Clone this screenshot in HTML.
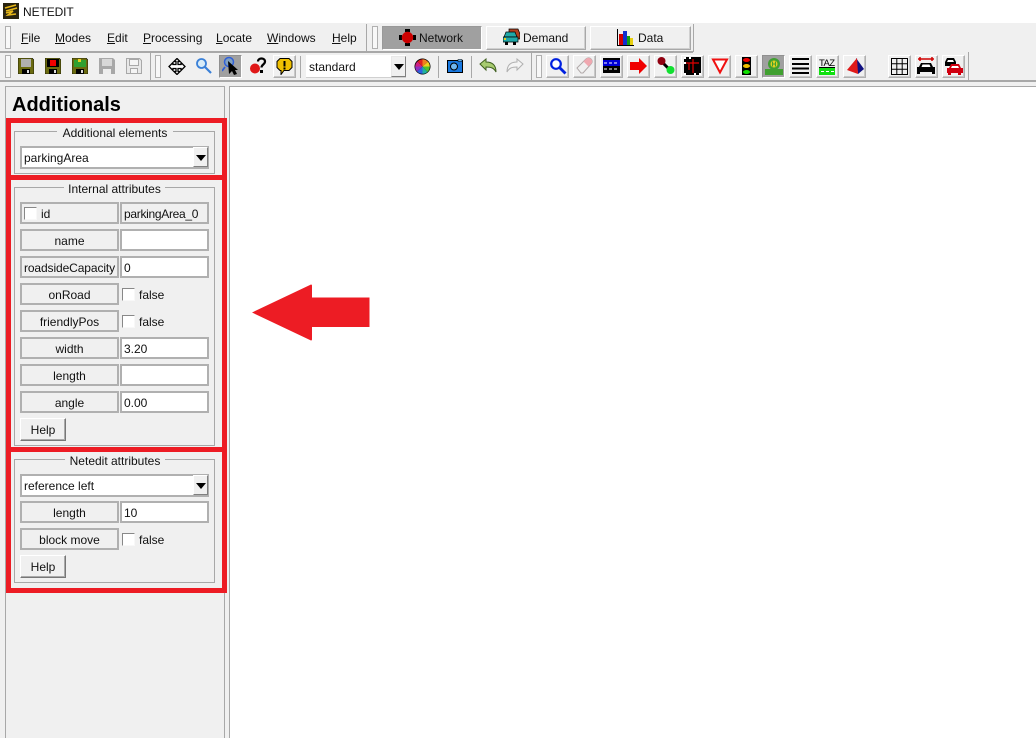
<!DOCTYPE html>
<html><head><meta charset="utf-8"><style>
html,body{margin:0;padding:0;background:#fff}
#r{position:relative;width:1036px;height:738px;overflow:hidden;background:#f0f0f0;font:12px/14px "Liberation Sans",sans-serif;color:#111}
#r div,#r svg,#r span{position:absolute;box-sizing:border-box}
.t{white-space:nowrap}
.l{background:#a8a8a8}
.g{width:6px;border:1px solid #b0b0b0;background:#f8f8f8}
.b{width:23px;height:23px;background:#f0f0f0;border:1px solid;border-color:#fff #b0b0b0 #b0b0b0 #fff;top:55px;box-shadow:inset -1px -1px 0 #c8c8c8}
.s{background:#a0a0a0;border-color:#909090 #fff #fff #909090;box-shadow:none}
.lb{left:20px;width:99px;height:22px;border:2px solid #b0b0b0;background:#f0f0f0;text-align:center;line-height:21px}
.tx{left:120px;width:89px;height:22px;border:2px solid #b0b0b0;background:#fff;padding-left:2px;line-height:21px}
.ck{width:13px;height:13px;background:#fff;border:1px solid;border-color:#888 #f8f8f8 #f8f8f8 #888}
.gb{left:14px;width:201px;border:1px solid #a8a8a8}
.cap{background:#f0f0f0;text-align:center;height:14px;line-height:14px}
.cb{left:20px;width:189px;height:23px;border:2px solid #b0b0b0;background:#fff;padding-left:2px;line-height:20px}
.ab{width:15px;height:20px;background:#f0f0f0;border:1px solid;border-color:#fff #808080 #808080 #fff}
.ab:after{content:"";position:absolute;left:2px;top:7px;border:5px solid transparent;border-top:6px solid #000;border-bottom:0}
.hp{left:20px;width:46px;height:23px;background:#f0f0f0;border:1px solid;border-color:#fff #777 #777 #fff;box-shadow:inset -1px -1px 0 #aaa;text-align:center;line-height:22px}
.m{top:31px;text-decoration:none}
.m u{text-decoration:underline}
.rd{background:#ed1c24}
.top{height:24px;border:1px solid;border-color:#fff #a8a8a8 #a8a8a8 #fff;top:26px;background:#f0f0f0;box-shadow:inset -1px -1px 0 #d0d0d0}
</style></head><body><div id="r">
<div style="left:0;top:0;width:1036px;height:23px;background:#fff"></div>
<svg style="left:3px;top:3px" width="16" height="16" viewBox="0 0 16 16"><rect width="16" height="16" fill="#2a2410"/><path d="M2 5L13 2M3 8L14 5M3 10L10 8L5 12L13 11" stroke="#e8b818" stroke-width="1.6" fill="none"/></svg>
<div class="t" style="left:23px;top:5px;letter-spacing:-.1px">NETEDIT</div>

<div class="l" style="left:0;top:51px;height:2px;width:693px"></div>
<div class="g" style="left:5px;top:26px;height:23px;width:6px"></div>
<div class="t m" style="left:21px"><u>F</u>ile</div>
<div class="t m" style="left:55px"><u>M</u>odes</div>
<div class="t m" style="left:107px"><u>E</u>dit</div>
<div class="t m" style="left:143px"><u>P</u>rocessing</div>
<div class="t m" style="left:216px"><u>L</u>ocate</div>
<div class="t m" style="left:267px"><u>W</u>indows</div>
<div class="t m" style="left:332px"><u>H</u>elp</div>
<div class="l" style="left:366px;top:24px;width:1px;height:28px"></div>
<div class="g" style="left:372px;top:26px;height:23px"></div>
<div class="l" style="left:693px;top:24px;width:1px;height:28px"></div>

<div class="top" style="left:382px;width:100px;background:#a0a0a0;border-color:#999 #fff #fff #999;box-shadow:none"></div>
<svg style="left:399px;top:29px" width="17" height="17" viewBox="0 0 17 17"><path d="M6 0h5v3h-5zM6 14h5v3h-5zM0 6h3v5h-3zM14 6h3v5h-3z" fill="#000"/><circle cx="8.5" cy="8.5" r="5.7" fill="#cc0000"/></svg>
<div class="t" style="left:419px;top:31px">Network</div>
<div class="top" style="left:486px;width:100px"></div>
<svg style="left:503px;top:28px" width="17" height="18" viewBox="0 0 17 18"><path d="M6 1h9l2 5v5H6z" fill="#b04020" stroke="#000" stroke-width=".7"/><path d="M3 4h9l2 5H1z" fill="#20a8a8" stroke="#000" stroke-width=".7"/><path d="M0 9h15v5H0z" fill="#20a8a8" stroke="#000" stroke-width=".7"/><path d="M2 14h3v3H2zM10 14h3v3h-3z" fill="#000"/><rect x="1" y="10" width="2" height="2" fill="#e8d020"/></svg>
<div class="t" style="left:523px;top:31px">Demand</div>
<div class="top" style="left:590px;width:101px"></div>
<svg style="left:617px;top:29px" width="17" height="17" viewBox="0 0 17 17"><path d="M.5 0v16.5H17" stroke="#000" fill="none"/><rect x="2" y="5" width="4" height="11" fill="#d00000"/><rect x="6" y="2" width="4" height="14" fill="#1030d0"/><rect x="10" y="7" width="3" height="9" fill="#10a010"/><rect x="13" y="9" width="3" height="7" fill="#e8d010"/></svg>
<div class="t" style="left:638px;top:31px">Data</div>

<!-- row 2 -->
<div class="l" style="left:0;top:80px;width:1036px;height:2px"></div>
<div class="g" style="left:5px;top:55px;height:23px"></div>
<svg style="left:18px;top:58px" width="16" height="16" viewBox="0 0 16 16"><path d="M0 0h14l2 2v14H0z" fill="#6b6b10" stroke="#000" stroke-width=".6"/><rect x="3" y="1" width="10" height="8" fill="#b0b0b0"/><rect x="4" y="11" width="8" height="5" fill="#000"/><rect x="9" y="12" width="2" height="3" fill="#ddd"/></svg>
<svg style="left:45px;top:58px" width="16" height="16" viewBox="0 0 16 16"><path d="M0 0h14l2 2v14H0z" fill="#6b6b10" stroke="#000" stroke-width=".6"/><rect x="2" y="1" width="12" height="8" fill="#000"/><rect x="5" y="2" width="6" height="6" fill="#f00000"/><rect x="4" y="11" width="8" height="5" fill="#000"/><rect x="9" y="12" width="2" height="3" fill="#ddd"/></svg>
<svg style="left:72px;top:58px" width="16" height="16" viewBox="0 0 16 16"><path d="M0 0h14l2 2v14H0z" fill="#6b6b10" stroke="#000" stroke-width=".6"/><rect x="2" y="2" width="12" height="7" fill="#30a030"/><rect x="6" y="1" width="3" height="3" fill="#e8d020"/><rect x="4" y="11" width="8" height="5" fill="#000"/><rect x="9" y="12" width="2" height="3" fill="#ddd"/></svg>
<svg style="left:99px;top:58px" width="16" height="16" viewBox="0 0 16 16"><path d="M0 0h14l2 2v14H0z" fill="#a8a8a8"/><rect x="3" y="1" width="10" height="7" fill="#d8d8d8"/><rect x="4" y="11" width="8" height="5" fill="#eee"/></svg>
<svg style="left:126px;top:58px" width="16" height="16" viewBox="0 0 16 16"><path d="M.5.5h13l2 2v13H.5z" fill="#e8e8e8" stroke="#a8a8a8"/><rect x="3.5" y="1.5" width="9" height="6" fill="#f4f4f4" stroke="#a8a8a8"/><rect x="4.5" y="10.5" width="7" height="5" fill="#f4f4f4" stroke="#a8a8a8"/></svg>
<div class="l" style="left:150px;top:52px;width:1px;height:29px"></div>
<div class="g" style="left:155px;top:55px;height:23px"></div>
<svg style="left:168px;top:58px" width="18" height="17" viewBox="0 0 18 17"><path d="M9 .5l3 3h-2v3h3v-2l4 4-4 4v-2h-3v3h2l-3 3-3-3h2v-3H5v2L1 8.500l4-4v2h3v-3H6z" fill="#fff" stroke="#000" stroke-width="1.300"/></svg>
<svg style="left:195px;top:57px" width="17" height="17" viewBox="0 0 17 17"><circle cx="6.500" cy="6.500" r="4.500" fill="#d8ecf8" stroke="#3a80d8" stroke-width="1.800"/><path d="M10 10l6 6" stroke="#3a80d8" stroke-width="2.200"/></svg>
<div class="b s" style="left:219px"></div>
<svg style="left:222px;top:56px" width="17" height="20" viewBox="0 0 17 20"><circle cx="7" cy="6" r="4.500" fill="#80a0c0" stroke="#3060d8" stroke-width="1.500"/><path d="M3 11L0 15" stroke="#3060d8" stroke-width="1.800"/><path d="M6 5l10 9h-3l2 4-3 1-2-4-3 3z" fill="#000"/></svg>
<svg style="left:249px;top:57px" width="18" height="18" viewBox="0 0 18 18"><circle cx="6" cy="11.500" r="5" fill="#e01818"/><path d="M9 4.500c0-4 7-4 7 0 0 3-3.500 3-3.500 6" stroke="#000" stroke-width="2.200" fill="none"/><rect x="11" y="13" width="3" height="3" fill="#000"/></svg>
<div class="b" style="left:273px"></div>
<svg style="left:276px;top:58px" width="17" height="17" viewBox="0 0 17 17"><path d="M4 .5h9l3 3v6l-3 3H8l-3 4v-4H4l-3-3v-6z" fill="#f0c000" stroke="#000"/><path d="M7.500 3h2v5.500h-2zM7.500 9.500h2v2h-2z" fill="#000"/></svg>
<div class="l" style="left:300px;top:56px;width:1px;height:22px"></div>
<div style="left:306px;top:55px;width:100px;height:23px;background:#fff;border:1px solid #d0d0d0;border-width:0 0 1px 0;padding-left:3px;line-height:24px">standard</div>
<div class="ab" style="left:391px;top:56px;width:15px;height:21px;border-color:#e8e8e8 #808080 #808080 #e8e8e8"></div>
<svg style="left:414px;top:58px" width="17" height="17" viewBox="0 0 17 17"><circle cx="8.500" cy="8.500" r="8" fill="#000"/><path d="M8.500 8.500V1.200A7.300 7.300 0 0 1 14 3.800z" fill="#f08020"/><path d="M8.500 8.500L14 3.800A7.300 7.300 0 0 1 15.800 8.500z" fill="#f0d020"/><path d="M8.500 8.500H15.800A7.300 7.300 0 0 1 13.500 14z" fill="#50c030"/><path d="M8.500 8.500L13.500 14A7.300 7.300 0 0 1 8.500 15.800z" fill="#20b0a0"/><path d="M8.500 8.500V15.800A7.300 7.300 0 0 1 3 13.500z" fill="#3060e0"/><path d="M8.500 8.500L3 13.500A7.300 7.300 0 0 1 1.200 8.500z" fill="#9030c0"/><path d="M8.500 8.500H1.200A7.300 7.300 0 0 1 3.500 3.500z" fill="#d02080"/><path d="M8.500 8.500L3.500 3.500A7.300 7.300 0 0 1 8.500 1.200z" fill="#e02020"/></svg>
<div class="l" style="left:438px;top:56px;width:1px;height:22px"></div>
<svg style="left:447px;top:59px" width="16" height="14" viewBox="0 0 16 14"><rect x=".5" y="1.500" width="15" height="12" fill="#1878e0" stroke="#000"/><rect x="11" y=".5" width="4" height="2" fill="#60b0f0" stroke="#000" stroke-width=".5"/><circle cx="7" cy="7.500" r="3.500" fill="#70b8f0" stroke="#000"/></svg>
<div class="l" style="left:471px;top:56px;width:1px;height:22px"></div>
<svg style="left:479px;top:58px" width="18" height="16" viewBox="0 0 18 16"><path d="M1 6l6-5v3c6 0 10 3 10 10-2-4-5-5-10-5v3z" fill="#a8cc70" stroke="#406020"/></svg>
<svg style="left:506px;top:58px" width="18" height="16" viewBox="0 0 18 16"><path d="M17 6l-6-5v3C5 4 1 7 1 14c2-4 5-5 10-5v3z" fill="#f4f4f4" stroke="#b0b0b0"/></svg>
<div class="l" style="left:531px;top:52px;width:1px;height:29px"></div>
<div class="g" style="left:536px;top:55px;height:23px"></div>

<div class="b" style="left:546px"></div>
<svg style="left:549px;top:57px" width="18" height="18" viewBox="0 0 18 18"><circle cx="7" cy="7" r="4.800" fill="#fff" stroke="#0020e0" stroke-width="2.200"/><path d="M10.500 10.500l6 6" stroke="#0020e0" stroke-width="2.800"/></svg>
<div class="b" style="left:573px"></div>
<svg style="left:576px;top:57px" width="18" height="18" viewBox="0 0 18 18"><path d="M1 11L10 2c2-2 4-1 5 0s2 3 0 5l-8 9H5z" fill="#f0f0f0" stroke="#b0a8a8"/><path d="M7.500 4.500L10 2c2-2 4-1 5 0s2 3 0 5l-2.500 2.500z" fill="#f0a8b0"/></svg>
<div class="b" style="left:600px"></div>
<svg style="left:603px;top:58px" width="17" height="16" viewBox="0 0 17 16"><rect width="17" height="15" fill="#000"/><rect y="2" width="17" height="6" fill="#0000d8"/><path d="M1 5h3M6 5h3M11 5h3M1 11h3M6 11h3M11 11h3" stroke="#fff"/></svg>
<div class="b" style="left:627px"></div>
<svg style="left:630px;top:58px" width="17" height="16" viewBox="0 0 17 16"><path d="M0 4h9V0l8 8-8 8v-4H0z" fill="#f00000"/></svg>
<div class="b" style="left:654px"></div>
<svg style="left:656px;top:56px" width="20" height="20" viewBox="0 0 20 20"><path d="M6 6l9 9" stroke="#000" stroke-width="3"/><circle cx="5.500" cy="5" r="4" fill="#900010"/><circle cx="14.500" cy="14" r="4" fill="#10e030"/></svg>
<div class="b" style="left:681px"></div>
<svg style="left:684px;top:57px" width="17" height="18" viewBox="0 0 17 18"><rect width="17" height="18" fill="#000"/><path d="M2 6h13M9 6v-4M9 6v10M5 6v7" stroke="#e00000" stroke-width="1.200"/><path d="M0 0h2v2H0zM5 0h2v2H5zM0 5h2v2H0zM15 16h2v2h-2zM0 16h2v2H0zM10 16h2v2h-2z" fill="#fff"/></svg>
<div class="b" style="left:708px"></div>
<svg style="left:711px;top:57px" width="18" height="18" viewBox="0 0 18 18"><path d="M2 2.500h14L9 15.500z" fill="#fff" stroke="#f01010" stroke-width="2"/></svg>
<div class="b" style="left:735px"></div>
<svg style="left:741px;top:57px" width="11" height="18" viewBox="0 0 11 18"><rect x="1" width="9" height="18" fill="#000"/><ellipse cx="5.500" cy="3" rx="3.500" ry="2" fill="#f00000"/><ellipse cx="5.500" cy="9" rx="3.500" ry="2" fill="#f0c000"/><ellipse cx="5.500" cy="15" rx="3.500" ry="2" fill="#10e000"/></svg>
<div class="b s" style="left:762px"></div>
<svg style="left:765px;top:57px" width="18" height="18" viewBox="0 0 18 18"><rect x="0" y="12" width="18" height="6" fill="#40a030"/><circle cx="9" cy="7" r="6" fill="#40a030"/><circle cx="9" cy="7" r="4" fill="#e0d020" stroke="#40a030"/><path d="M7.500 4.500v5M10.500 4.500v5M7.500 7h3" stroke="#40a030"/></svg>
<div class="b" style="left:789px"></div>
<svg style="left:792px;top:58px" width="17" height="16" viewBox="0 0 17 16"><path d="M0 1h17M0 6h17M0 10.500h17M0 15h17" stroke="#000" stroke-width="2"/></svg>
<div class="b" style="left:816px"></div>
<svg style="left:819px;top:58px" width="18" height="17" viewBox="0 0 18 17"><rect y="10" width="16" height="7" fill="#10e010"/><path d="M2 13.500h3M7 13.500h3M12 13.500h3" stroke="#fff"/><rect y="9" width="16" height="1" fill="#000"/><text x="0" y="8" font-family="Liberation Sans" font-size="9.500" fill="#000" textLength="16">TAZ</text></svg>
<div class="b" style="left:843px"></div>
<svg style="left:846px;top:57px" width="19" height="18" viewBox="0 0 19 18"><path d="M10 1L18 12L12 17z" fill="#101080"/><path d="M11 1L1 13l11 4z" fill="#e01818"/></svg>
<div class="b" style="left:888px"></div>
<svg style="left:891px;top:58px" width="17" height="17" viewBox="0 0 17 17"><path d="M.5.5h16v16H.5zM5.800.5v16M11.200.5v16M.5 5.800h16M.5 11.200h16" fill="none" stroke="#000"/></svg>
<div class="b" style="left:915px"></div>
<svg style="left:917px;top:57px" width="19" height="18" viewBox="0 0 19 18"><path d="M1 2h16M3 0v4M15 0v4" stroke="#d00000" stroke-width="1.500"/><path d="M4 6h10l2 4h2v7h-3v-2H3v2H0v-7h2z" fill="#000"/><path d="M5.500 7.500h7l1 2.500h-9z" fill="#fff"/></svg>
<div class="b" style="left:942px"></div>
<svg style="left:945px;top:58px" width="18" height="17" viewBox="0 0 18 17"><path d="M2 0h7l2 4v4H0V4z" fill="#000"/><path d="M3 2h5l1 2H2z" fill="#fff"/><path d="M6 6h8l2 4h2v5h-2v2h-3v-2H6v2H3v-2H2v-5h2z" fill="#d00010"/><path d="M7 8h6l1 2H6z" fill="#fff"/></svg>
<div class="l" style="left:968px;top:52px;width:1px;height:29px"></div>

<!-- left panel -->
<div style="left:0;top:82px;width:1036px;height:4px;background:#f0f0f0"></div>
<div class="l" style="left:5px;top:86px;width:1px;height:652px"></div>
<div class="l" style="left:5px;top:86px;width:220px;height:1px"></div>
<div class="l" style="left:224px;top:86px;width:1px;height:652px"></div>
<div class="t" style="left:12px;top:94px;font:bold 20px/22px 'Liberation Sans',sans-serif;color:#000">Additionals</div>
<div class="l" style="left:229px;top:86px;width:807px;height:1px"></div>
<div class="l" style="left:229px;top:86px;width:1px;height:652px"></div>
<div style="left:230px;top:87px;width:806px;height:651px;background:#fff"></div>

<!-- group 1 -->
<div class="gb" style="top:131px;height:43px"></div>
<div class="t cap" style="left:57px;top:126px;width:116px">Additional elements</div>
<div class="cb" style="top:146px">parkingArea</div>
<div class="ab" style="left:193px;top:147px"></div>

<!-- group 2 -->
<div class="gb" style="top:187px;height:259px"></div>
<div class="t cap" style="left:64px;top:182px;width:101px">Internal attributes</div>
<div class="lb" style="top:202px"></div><div class="ck" style="left:24px;top:207px"></div><div class="t" style="left:41px;top:207px">id</div>
<div class="tx" style="top:202px;background:#f0f0f0;letter-spacing:-.3px">parkingArea_0</div>
<div class="lb" style="top:229px">name</div><div class="tx" style="top:229px"></div>
<div class="lb" style="top:256px;letter-spacing:-.1px">roadsideCapacity</div><div class="tx" style="top:256px">0</div>
<div class="lb" style="top:283px">onRoad</div><div class="ck" style="left:122px;top:288px"></div><div class="t" style="left:139px;top:288px">false</div>
<div class="lb" style="top:310px">friendlyPos</div><div class="ck" style="left:122px;top:315px"></div><div class="t" style="left:139px;top:315px">false</div>
<div class="lb" style="top:337px">width</div><div class="tx" style="top:337px">3.20</div>
<div class="lb" style="top:364px">length</div><div class="tx" style="top:364px"></div>
<div class="lb" style="top:391px">angle</div><div class="tx" style="top:391px">0.00</div>
<div class="hp" style="top:418px">Help</div>

<!-- group 3 -->
<div class="gb" style="top:459px;height:124px"></div>
<div class="t cap" style="left:65px;top:454px;width:100px">Netedit attributes</div>
<div class="cb" style="top:474px">reference left</div>
<div class="ab" style="left:193px;top:475px"></div>
<div class="lb" style="top:501px">length</div><div class="tx" style="top:501px">10</div>
<div class="lb" style="top:528px">block move</div><div class="ck" style="left:122px;top:533px"></div><div class="t" style="left:139px;top:533px">false</div>
<div class="hp" style="top:555px">Help</div>

<!-- red boxes -->
<div class="rd" style="left:6px;top:118px;width:221px;height:5px"></div>
<div class="rd" style="left:6px;top:175px;width:221px;height:5px"></div>
<div class="rd" style="left:6px;top:447px;width:221px;height:5px"></div>
<div class="rd" style="left:6px;top:588px;width:221px;height:5px"></div>
<div class="rd" style="left:6px;top:118px;width:5px;height:475px"></div>
<div class="rd" style="left:222px;top:118px;width:5px;height:475px"></div>
<svg style="left:252px;top:284px" width="118" height="58" viewBox="0 0 118 58"><path d="M0 28.500L59 0.500a1 1 0 0 1 1 1V13.500H117.500V43H60V55.500a1 1 0 0 1-1 1z" fill="#ed1c24"/></svg>
</div></body></html>
